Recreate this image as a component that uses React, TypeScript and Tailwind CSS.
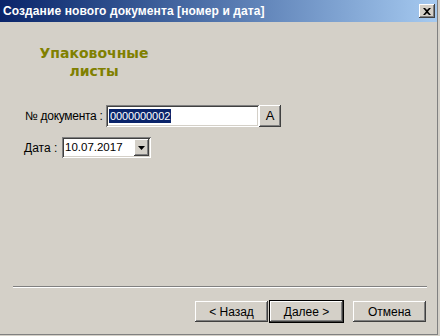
import React from 'react';

const raised =
  'bg-[#d4d0c8] shadow-[inset_-1px_-1px_#404040,inset_1px_1px_#ffffff,inset_-2px_-2px_#808080,inset_2px_2px_#d4d0c8]';
const sunken =
  'bg-white shadow-[inset_1px_1px_#808080,inset_-1px_-1px_#ffffff,inset_2px_2px_#404040,inset_-2px_-2px_#d4d0c8]';

function WinButton({ label, isDefault = false }: { label: string; isDefault?: boolean }) {
  return (
    <div className={isDefault ? 'border border-black' : 'border border-transparent'}>
      <div className={`${raised} w-[73px] h-[21px] flex items-center justify-center text-[12px] text-black`}>
        {label}
      </div>
    </div>
  );
}

export default function App() {
  return (
    <div className="w-[440px] h-[336px] bg-[#d4d0c8] overflow-hidden" style={{ fontFamily: '"Liberation Sans", Arial, sans-serif' }}>
      <div className="w-[438px] h-[335px] border-r border-b border-[#808080] flex flex-col">
        {/* title bar */}
        <div className="h-[22px] flex items-center justify-between pl-[3px] pr-[2px] bg-gradient-to-r from-[#0a246a] to-[#a6caf0]">
          <span className="text-white font-bold text-[12px] tracking-[0.1px]">Создание нового документа [номер и дата]</span>
          <div className={`${raised} w-[16px] h-[14px] flex items-center justify-center`}>
            <svg width="8" height="7" viewBox="0 0 8 7">
              <path d="M0 0h2l2 2 2-2h2L5 3.5 8 7H6L4 5 2 7H0l3-3.5z" fill="#000" />
            </svg>
          </div>
        </div>

        {/* heading */}
        <div className="w-[188px] mt-[22px] text-center text-[#808000] font-bold text-[14px] leading-[18px]" style={{ fontFamily: '"DejaVu Sans", Verdana, sans-serif' }}>
          <div>Упаковочные</div>
          <div>листы</div>
        </div>

        {/* form */}
        <div className="mt-[25px] pl-[25px] flex flex-col gap-[10px] text-[12px] text-black">
          <div className="flex items-center h-[22px]">
            <span className="w-[81px] whitespace-nowrap tracking-[-0.3px]">№ документа :</span>
            <div className={`${sunken} w-[153px] h-[22px] flex items-center pl-[3px]`}>
              <span className="bg-[#0a246a] text-white text-[11px] leading-[14px] px-px tracking-[-0.1px]">0000000002</span>
            </div>
            <div className={`${raised} w-[22px] h-[22px] flex items-center justify-center text-[13px]`}>A</div>
          </div>
          <div className="flex items-center h-[21px] -ml-px">
            <span className="w-[38px] whitespace-nowrap">Дата :</span>
            <div className={`${sunken} w-[89px] h-[21px] flex items-center justify-between pl-[3px] pr-[2px]`}>
              <span className="text-[11.5px]">10.07.2017</span>
              <div className={`${raised} w-[15px] h-[17px] flex items-center justify-center`}>
                <svg width="7" height="4" viewBox="0 0 7 4">
                  <path d="M0 0h7L3.5 4z" fill="#000" />
                </svg>
              </div>
            </div>
          </div>
        </div>

        {/* separator */}
        <div className="mt-auto mx-[13px] w-[414px] border-t border-[#808080] border-b border-b-white" />

        {/* buttons */}
        <div className="flex justify-end pr-[10px] mt-[12px] mb-[11px]">
          <WinButton label="< Назад" />
          <WinButton label="Далее >" isDefault />
          <div className="w-[8px]" />
          <WinButton label="Отмена" />
        </div>
      </div>
    </div>
  );
}
